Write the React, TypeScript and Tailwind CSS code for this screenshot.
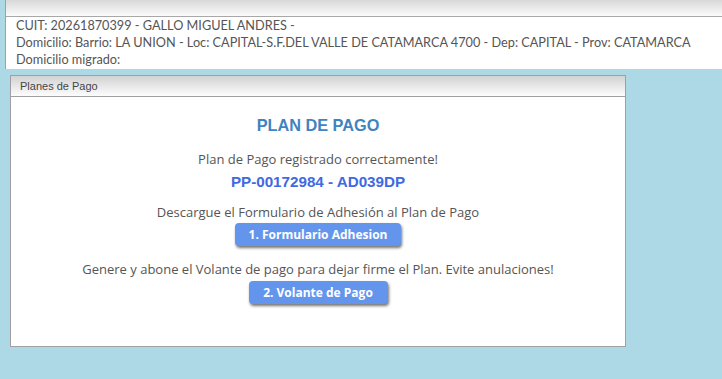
const textFont = { fontFamily: '"Open Sans", "Liberation Sans", Arial, sans-serif' };
const infoFont = { fontFamily: 'Lato, "Liberation Sans", Arial, sans-serif' };
const headFont = { fontFamily: '"Liberation Sans", Arial, sans-serif' };

export default function App() {
  return (
    <div className="min-h-[379px] w-full bg-[#add8e6] text-[13px] text-[#555]" style={textFont}>
      {/* datos del contribuyente */}
      <div className="ml-[5px] border-l border-[#a0a0a0] bg-white">
        <div className="h-[17px] border-b border-[#a8a8a8] bg-gradient-to-b from-[#d8d8d8] to-[#fbfbfb]" />
        <div className="whitespace-nowrap px-[10px] pb-[1px] text-[12.7px] leading-[17px]" style={infoFont}>
          <div>CUIT: 20261870399 - GALLO MIGUEL ANDRES -</div>
          <div>Domicilio: Barrio: LA UNION - Loc: CAPITAL-S.F.DEL VALLE DE CATAMARCA 4700 - Dep: CAPITAL - Prov: CATAMARCA</div>
          <div>Domicilio migrado:</div>
        </div>
      </div>

      {/* panel plan de pago */}
      <div className="ml-[10px] mt-[6px] w-[616px] border border-[#a0a0a0] bg-white">
        <div className="h-[21px] border-b border-[#a0a0a0] bg-gradient-to-b from-[#d2d2d2] to-[#fdfdfd] pl-[9px] text-[11px] leading-[21px] text-[#444]" style={headFont}>
          Planes de Pago
        </div>
        <div className="flex h-[249px] flex-col items-center pt-[17px]">
          <div className="text-[16.3px] font-bold leading-[22px] text-[#3f83bf]" style={headFont}>PLAN DE PAGO</div>
          <div className="mt-[14px] leading-[18px]">Plan de Pago registrado correctamente!</div>
          <div className="mt-[4px] text-[15.2px] font-bold leading-[20px] text-[#4169e1]" style={headFont}>PP-00172984 - AD039DP</div>
          <div className="mt-[11px] leading-[18px]">Descargue el Formulario de Adhesión al Plan de Pago</div>
          <button className="mt-[2px] h-[23px] w-[166px] rounded-[4px] bg-[#6495ed] text-[12px] font-bold text-white shadow-[1px_2px_3px_rgba(0,0,0,0.55)]">
            1. Formulario Adhesion
          </button>
          <div className="mt-[14px] leading-[18px]">Genere y abone el Volante de pago para dejar firme el Plan. Evite anulaciones!</div>
          <button className="mt-[3px] h-[23px] w-[139px] rounded-[4px] bg-[#6495ed] text-[12px] font-bold text-white shadow-[1px_2px_3px_rgba(0,0,0,0.55)]">
            2. Volante de Pago
          </button>
        </div>
      </div>
    </div>
  );
}
